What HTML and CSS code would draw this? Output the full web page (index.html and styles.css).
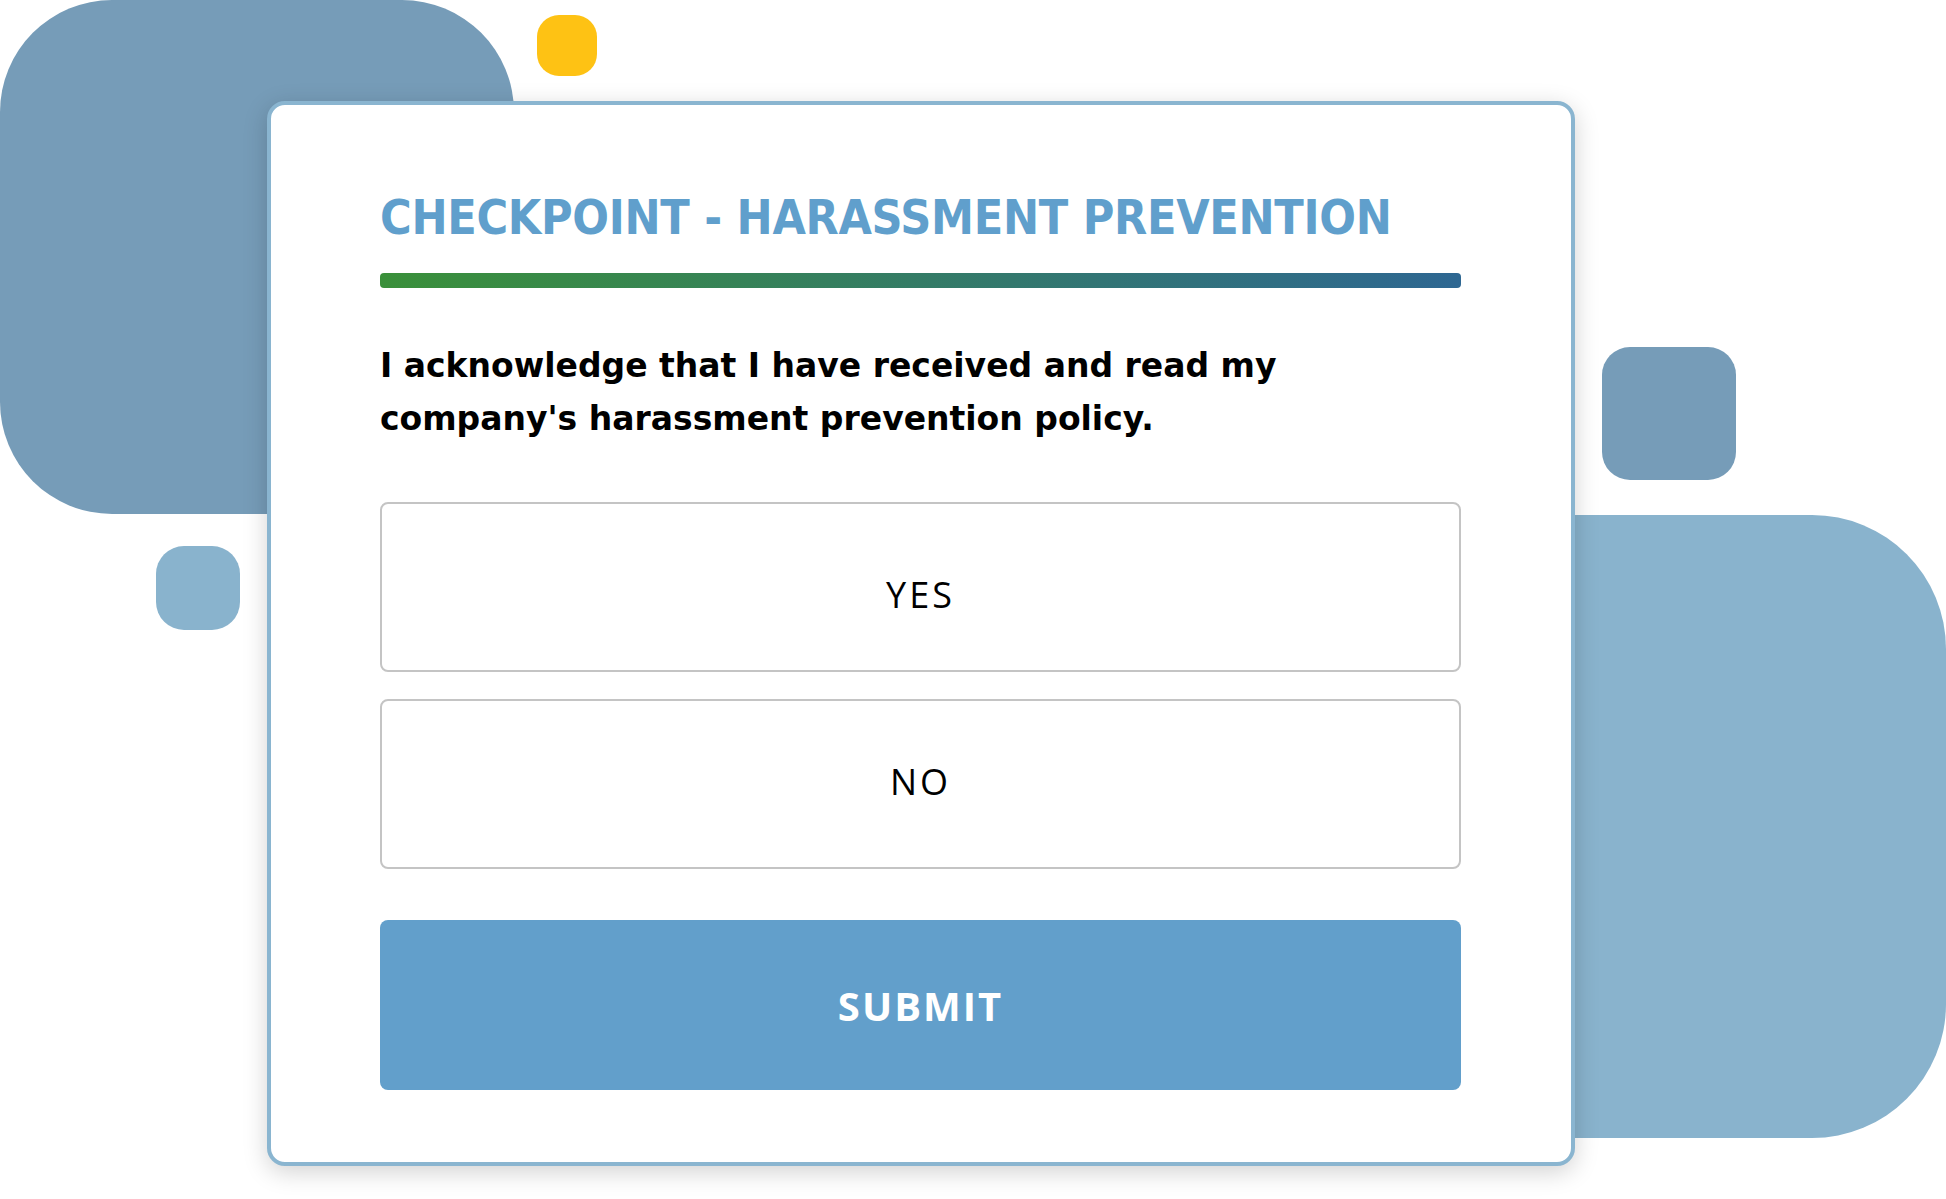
FILE: index.html
```html
<!DOCTYPE html>
<html lang="en">
<head>
    <meta charset="UTF-8">
    <title>Checkpoint - Harassment Prevention</title>
    <link rel="stylesheet" href="styles.css">
</head>
<body>

    <!-- background shapes -->
    <div class="shape shape-big-left"></div>
    <div class="shape shape-yellow"></div>
    <div class="shape shape-small"></div>
    <div class="shape shape-square"></div>
    <div class="shape shape-big-right"></div>

    <div class="card">
        <h1 class="title">CHECKPOINT - HARASSMENT PREVENTION</h1>
        <div class="title-bar"></div>

        <p class="question">
            I acknowledge that I have received and read my company's harassment prevention policy.
        </p>

        <div class="options">
            <button class="option">YES</button>
            <button class="option option-no">NO</button>
        </div>

        <button class="submit">SUBMIT</button>
    </div>

</body>
</html>
```

FILE: styles.css
```css
body {
    margin: 0;
    width: 1946px;
    height: 1199px;
    position: relative;
    overflow: hidden;
    background-color: #fff;
    font-family: "Open Sans", Arial, sans-serif;
}
.shape {
    position: absolute;
}
.shape-big-left {
    left: 0;
    top: 0;
    width: 514px;
    height: 514px;
    border-radius: 112px;
    background-color: #769cb8;
}
.shape-yellow {
    left: 537px;
    top: 15px;
    width: 60px;
    height: 61px;
    border-radius: 22px;
    background-color: #fec214;
}
.shape-small {
    left: 156px;
    top: 546px;
    width: 84px;
    height: 84px;
    border-radius: 28px;
    background-color: #89b3cd;
}
.shape-square {
    left: 1602px;
    top: 347px;
    width: 134px;
    height: 133px;
    border-radius: 28px;
    background-color: #769cb8;
}
.shape-big-right {
    left: 1400px;
    top: 515px;
    width: 546px;
    height: 623px;
    border-radius: 0 134px 134px 0;
    background-color: #89b3cd;
}
.card {
    position: relative;
    z-index: 1;
    box-sizing: border-box;
    margin: 101px 0 0 267px;
    width: 1308px;
    height: 1065px;
    padding: 83px 110px 0 109px;
    background-color: #fff;
    border: 4px solid #8ab5d0;
    border-radius: 18px;
    box-shadow: 0 6px 24px rgba(0, 0, 0, 0.18);
}
.title {
    margin: 0;
    font-family: "DejaVu Sans Condensed", "DejaVu Sans", sans-serif;
    font-weight: bold;
    font-size: 48px;
    line-height: 58px;
    letter-spacing: -0.3px;
    color: #609fcc;
    white-space: nowrap;
}
.title-bar {
    margin-top: 27px;
    height: 15px;
    border-radius: 4px;
    background: linear-gradient(to right, #3a903a, #2e6792);
}
.question {
    margin: 51px 0 0 0;
    max-width: 960px;
    font-family: "DejaVu Sans", sans-serif;
    font-weight: 700;
    font-size: 33px;
    line-height: 53px;
    color: #000;
}
.options {
    display: flex;
    flex-direction: column;
    gap: 27px;
    margin-top: 57px;
}
.option, .submit {
    display: flex;
    align-items: center;
    justify-content: center;
    box-sizing: border-box;
    width: 100%;
    height: 170px;
    border-radius: 8px;
    font-family: "Open Sans", Arial, sans-serif;
    cursor: pointer;
}
.option {
    padding: 14px 0 0 0;
    background-color: #fff;
    border: 2px solid #c4c4c4;
    font-size: 36px;
    letter-spacing: 3px;
    color: #000;
}
.option-no {
    padding: 0 0 6px 0;
}
.submit {
    margin-top: 51px;
    padding: 0;
    border: none;
    background-color: #629fcb;
    font-size: 40px;
    font-weight: 700;
    letter-spacing: 2px;
    color: #fff;
}
```
